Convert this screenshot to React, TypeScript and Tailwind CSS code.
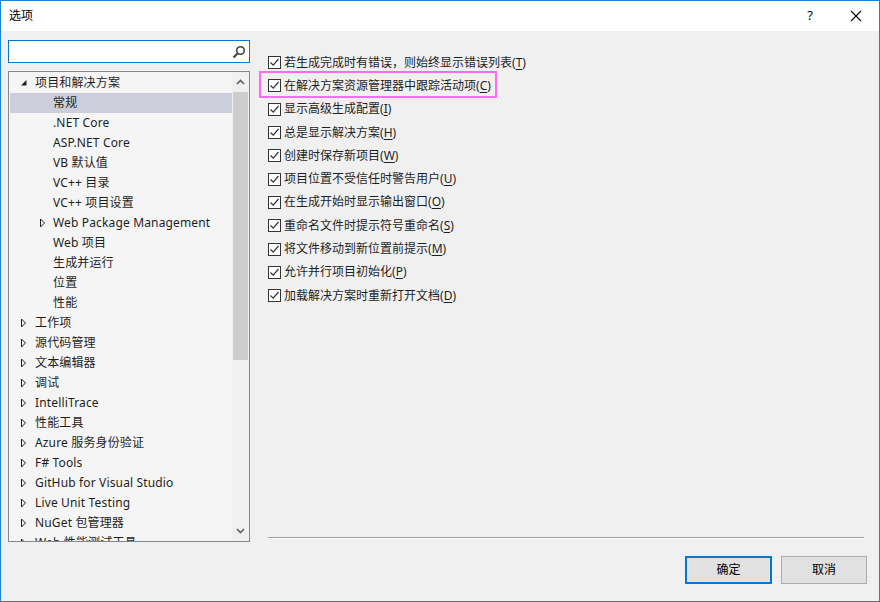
import { useState } from 'react'

const FONT = "font-['Segoe_UI','Noto_Sans','Noto_Sans_CJK_SC',sans-serif]"

type Node = { label: string; level: 0 | 1; arrow?: 'open' | 'closed' }

const tree: Node[] = [
  { label: '项目和解决方案', level: 0, arrow: 'open' },
  { label: '常规', level: 1 },
  { label: '.NET Core', level: 1 },
  { label: 'ASP.NET Core', level: 1 },
  { label: 'VB 默认值', level: 1 },
  { label: 'VC++ 目录', level: 1 },
  { label: 'VC++ 项目设置', level: 1 },
  { label: 'Web Package Management', level: 1, arrow: 'closed' },
  { label: 'Web 项目', level: 1 },
  { label: '生成并运行', level: 1 },
  { label: '位置', level: 1 },
  { label: '性能', level: 1 },
  { label: '工作项', level: 0, arrow: 'closed' },
  { label: '源代码管理', level: 0, arrow: 'closed' },
  { label: '文本编辑器', level: 0, arrow: 'closed' },
  { label: '调试', level: 0, arrow: 'closed' },
  { label: 'IntelliTrace', level: 0, arrow: 'closed' },
  { label: '性能工具', level: 0, arrow: 'closed' },
  { label: 'Azure 服务身份验证', level: 0, arrow: 'closed' },
  { label: 'F# Tools', level: 0, arrow: 'closed' },
  { label: 'GitHub for Visual Studio', level: 0, arrow: 'closed' },
  { label: 'Live Unit Testing', level: 0, arrow: 'closed' },
  { label: 'NuGet 包管理器', level: 0, arrow: 'closed' },
  { label: 'Web 性能测试工具', level: 0, arrow: 'closed' },
]

const options: [string, string][] = [
  ['若生成完成时有错误，则始终显示错误列表', 'T'],
  ['在解决方案资源管理器中跟踪活动项', 'C'],
  ['显示高级生成配置', 'I'],
  ['总是显示解决方案', 'H'],
  ['创建时保存新项目', 'W'],
  ['项目位置不受信任时警告用户', 'U'],
  ['在生成开始时显示输出窗口', 'O'],
  ['重命名文件时提示符号重命名', 'S'],
  ['将文件移动到新位置前提示', 'M'],
  ['允许并行项目初始化', 'P'],
  ['加载解决方案时重新打开文档', 'D'],
]

function Arrow({ kind }: { kind: 'open' | 'closed' }) {
  if (kind === 'open')
    return (
      <svg width="8" height="8" viewBox="0 0 8 8" className="shrink-0">
        <path d="M1 6.5 L6.5 6.5 L6.5 1 Z" fill="#1e1e1e" />
      </svg>
    )
  return (
    <svg width="8" height="10" viewBox="0 0 8 10" className="shrink-0">
      <path d="M1.5 1 L5.5 5 L1.5 9 Z" fill="none" stroke="#1e1e1e" strokeWidth="1" />
    </svg>
  )
}

function Check() {
  return (
    <span className="w-[13px] h-[13px] border border-[#333] bg-white flex items-center justify-center shrink-0">
      <svg width="11" height="11" viewBox="0 0 11 11">
        <path d="M1.5 5.5 L4.2 8.2 L9.5 2" fill="none" stroke="#333" strokeWidth="1.2" />
      </svg>
    </span>
  )
}

export default function App() {
  const [sel] = useState(1)
  return (
    <div className={`${FONT} w-[880px] h-[602px] border border-[#1883d7] bg-[#f0f0f0] flex flex-col text-[12px] text-[#1e1e1e] overflow-hidden`}>
      {/* Title bar */}
      <div className="h-[30px] bg-white flex items-center pl-[8px] shrink-0">
        <span className="text-[12px] text-black">选项</span>
        <div className="flex-1" />
        <span className="w-[46px] text-center text-[13px] text-black">?</span>
        <span className="w-[46px] flex items-center justify-center">
          <svg width="12" height="12" viewBox="0 0 12 12">
            <path d="M1 1 L11 11 M11 1 L1 11" stroke="#000" strokeWidth="1.1" />
          </svg>
        </span>
      </div>

      <div className="flex flex-1 min-h-0">
        {/* Left column */}
        <div className="w-[242px] ml-[7px] flex flex-col shrink-0">
          <div className="mt-[9px] h-[23px] border border-[#0078d7] bg-white flex items-center justify-end pr-[3px]">
            <svg width="14" height="14" viewBox="0 0 14 14">
              <circle cx="8.5" cy="5.5" r="3.8" fill="none" stroke="#404040" strokeWidth="1.6" />
              <path d="M5.8 8.2 L1.5 12.5" stroke="#404040" strokeWidth="2" />
            </svg>
          </div>
          <div className="mt-[8px] h-[471px] border border-[#828790] bg-[#f5f5f5] flex overflow-hidden">
            <div className="flex-1 flex flex-col overflow-hidden pt-[1px] pl-[1px]">
              {tree.map((n, i) => (
                <div
                  key={n.label}
                  className={`h-[20px] shrink-0 flex items-center ${i === sel ? 'bg-[#cccedb]' : ''}`}
                >
                  <div className={`${n.level === 0 ? 'w-[25px] pl-[10px]' : 'w-[43px] pl-[29px]'} flex items-center shrink-0`}>
                    {n.arrow && <Arrow kind={n.arrow} />}
                  </div>
                  <span className="whitespace-nowrap leading-[20px] tracking-[0.15px]">{n.label}</span>
                </div>
              ))}
            </div>
            {/* Scrollbar */}
            <div className="w-[17px] bg-[#f0f0f0] flex flex-col items-center shrink-0">
              <div className="h-[20px] flex items-center justify-center">
                <svg width="9" height="6" viewBox="0 0 9 6">
                  <path d="M1 5 L4.5 1.5 L8 5" fill="none" stroke="#606060" strokeWidth="1.6" />
                </svg>
              </div>
              <div className="w-[15px] h-[268px] bg-[#cdcdcd]" />
              <div className="flex-1" />
              <div className="h-[20px] flex items-center justify-center">
                <svg width="9" height="6" viewBox="0 0 9 6">
                  <path d="M1 1 L4.5 4.5 L8 1" fill="none" stroke="#606060" strokeWidth="1.6" />
                </svg>
              </div>
            </div>
          </div>
        </div>

        {/* Right column */}
        <div className="flex-1 flex flex-col pl-[18px] pr-[14px]">
          <div className="flex flex-col mt-[20px]">
            {options.map(([text, key], i) => (
              <div
                key={key}
                className={`h-[23.3px] flex items-center gap-[3px] ${i === 1 ? 'relative' : ''}`}
              >
                {i === 1 && (
                  <div className="absolute left-[-9px] top-[-3px] w-[238px] h-[27px] border-2 border-[#ff6cf0] pointer-events-none" />
                )}
                <Check />
                <span className="whitespace-nowrap text-[12px]">
                  {text}(<span className="underline underline-offset-2">{key}</span>)
                </span>
              </div>
            ))}
          </div>
          <div className="flex-1" />
          <div className="h-[2px] border-t border-[#a0a0a0] border-b border-b-white mb-[17px] mr-[1px]" />
          <div className="flex justify-end gap-[9px] mb-[17px] mr-[-2px]">
            <button className="w-[87px] h-[28px] border-2 border-[#0078d7] bg-[#e1e1e1] text-[12px] text-black">确定</button>
            <button className="w-[86px] h-[28px] border border-[#adadad] bg-[#e1e1e1] text-[12px] text-black">取消</button>
          </div>
        </div>
      </div>
    </div>
  )
}
